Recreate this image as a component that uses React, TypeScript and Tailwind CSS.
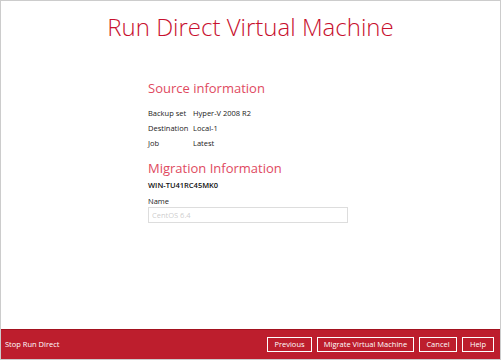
export default function App() {
  return (
    <div className="w-[501px] h-[360px] border border-[#cccccc] bg-white flex flex-col font-['Open_Sans',sans-serif]">
      <div className="flex-1 flex flex-col">
        <h1 className="text-center text-[24px] font-light text-[#c8102e] mt-[10px] leading-[32px]">
          Run Direct Virtual Machine
        </h1>
        <div className="pl-[147px] mt-[36px] flex flex-col">
          <h2 className="text-[13px] text-[#e04a5f] leading-[18px]">Source information</h2>
          <div className="mt-[11px] grid grid-cols-[45px_1fr] gap-y-[4px] text-[7.5px] text-[#222] leading-[11px]">
            <span>Backup set</span>
            <span>Hyper-V 2008 R2</span>
            <span>Destination</span>
            <span>Local-1</span>
            <span>Job</span>
            <span>Latest</span>
          </div>
          <h2 className="mt-[10px] text-[13px] text-[#e04a5f] leading-[18px]">Migration Information</h2>
          <div className="mt-[3px] text-[7.5px] font-semibold text-[#111] leading-[11px]">WIN-TU41RC45MK0</div>
          <div className="mt-[5px] text-[7.5px] text-[#222] leading-[11px]">Name</div>
          <input
            className="w-[200px] h-[16px] border border-[#dddddd] px-[3px] text-[7.5px] text-[#999] outline-none"
            placeholder="CentOS 6.4"
          />
        </div>
      </div>
      <div className="h-[30px] bg-[#bd1e2d] border-t border-[#a3121f] flex items-center justify-between pl-[4px] pr-[6px] text-[7.5px] text-white">
        <span>Stop Run Direct</span>
        <div className="flex gap-[5px]">
          <button className="h-[15px] w-[45px] border border-white">Previous</button>
          <button className="h-[15px] w-[97px] border border-white">Migrate Virtual Machine</button>
          <button className="h-[15px] w-[38px] border border-white">Cancel</button>
          <button className="h-[15px] w-[32px] border border-white">Help</button>
        </div>
      </div>
    </div>
  );
}
